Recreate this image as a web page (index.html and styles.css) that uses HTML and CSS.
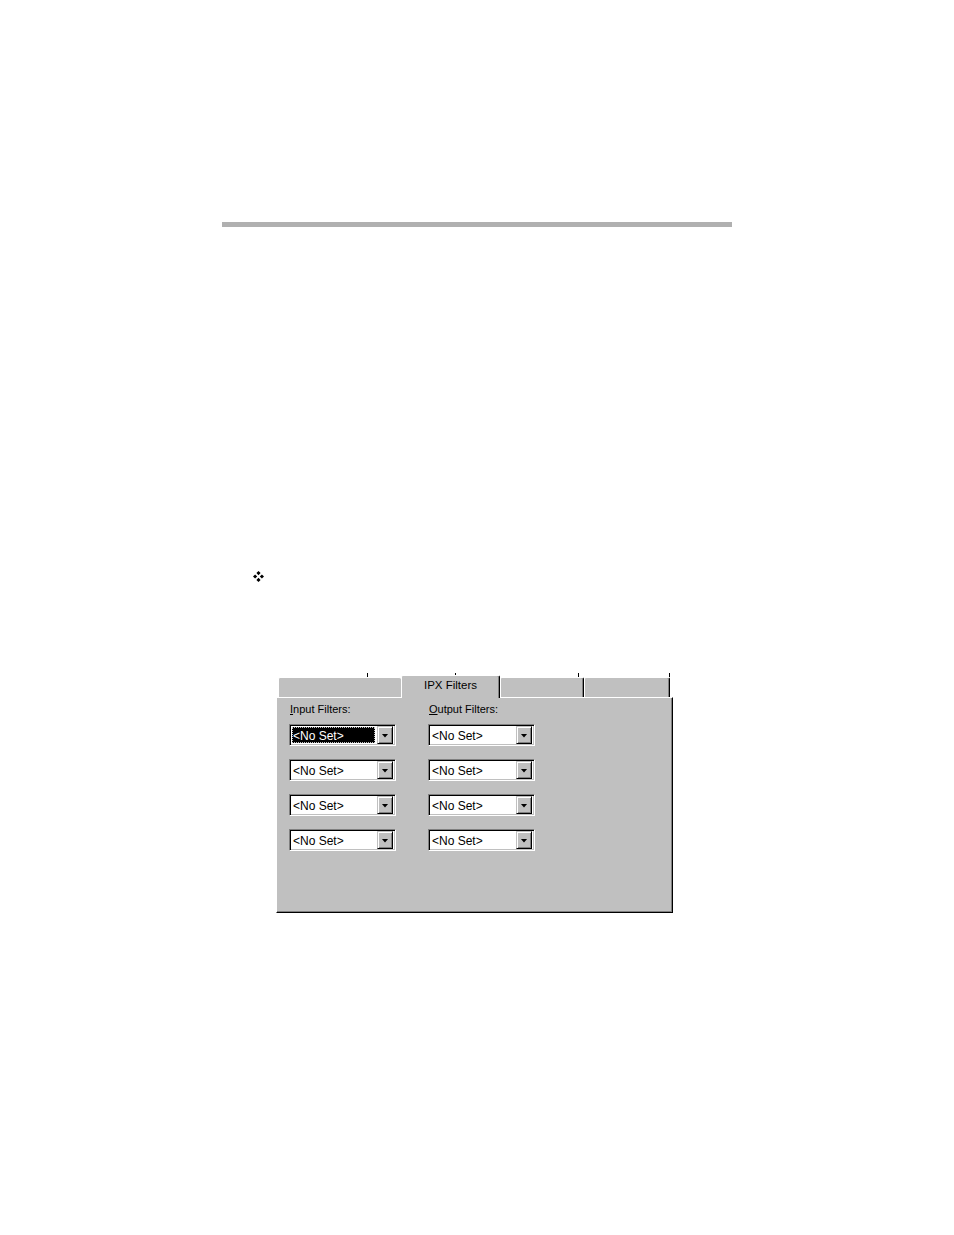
FILE: index.html
```html
<!DOCTYPE html>
<html>
<head>
<meta charset="utf-8">
<link rel="stylesheet" href="styles.css">
</head>
<body>
<div class="rule"></div>
<div class="bullet"><svg width="11" height="11" viewBox="0 0 11 11"><path d="M5.5 0 L7.6 2.1 L5.5 4.2 L3.4 2.1 Z M2.1 3.4 L4.2 5.5 L2.1 7.6 L0 5.5 Z M8.9 3.4 L11 5.5 L8.9 7.6 L6.8 5.5 Z M5.5 6.8 L7.6 8.9 L5.5 11 L3.4 8.9 Z" fill="#000"/></svg></div>
<div class="dialog">
  <div class="backrow">
    <span class="tick t1"></span><span class="tick t2"></span><span class="tick t3"></span><span class="tick t4"></span>
  </div>
  <div class="tabs">
    <div class="tab tab1"></div>
    <div class="tab active">IPX Filters</div>
    <div class="tab tab3"></div>
    <div class="tab tab4"></div>
  </div>
  <div class="panel">
    <div class="col">
      <div class="label"><u>I</u>nput Filters:</div>
      <div class="combo"><div class="field selected"><span>&lt;No Set&gt;</span></div><div class="btn"><i class="tri"></i></div></div>
      <div class="combo"><div class="field"><span>&lt;No Set&gt;</span></div><div class="btn"><i class="tri"></i></div></div>
      <div class="combo"><div class="field"><span>&lt;No Set&gt;</span></div><div class="btn"><i class="tri"></i></div></div>
      <div class="combo"><div class="field"><span>&lt;No Set&gt;</span></div><div class="btn"><i class="tri"></i></div></div>
    </div>
    <div class="col">
      <div class="label"><u>O</u>utput Filters:</div>
      <div class="combo"><div class="field"><span>&lt;No Set&gt;</span></div><div class="btn"><i class="tri"></i></div></div>
      <div class="combo"><div class="field"><span>&lt;No Set&gt;</span></div><div class="btn"><i class="tri"></i></div></div>
      <div class="combo"><div class="field"><span>&lt;No Set&gt;</span></div><div class="btn"><i class="tri"></i></div></div>
      <div class="combo"><div class="field"><span>&lt;No Set&gt;</span></div><div class="btn"><i class="tri"></i></div></div>
    </div>
  </div>
</div>
</body>
</html>
```
FILE: styles.css
```css
html, body {
  margin: 0;
  padding: 0;
  background: #ffffff;
}
body {
  font-family: "Liberation Sans", Arial, sans-serif;
  color: #000;
}
.rule {
  margin: 222px 0 0 222px;
  width: 510px;
  height: 5px;
  background: #b0b0b0;
}
.bullet {
  margin: 344px 0 0 253px;
  width: 11px;
  height: 11px;
}
.bullet svg {
  display: block;
}
.dialog {
  margin: 91px 0 0 276px;
  width: 397px;
}
.backrow {
  display: flex;
  height: 4px;
}
.tick {
  box-sizing: border-box;
  height: 4px;
  border-right: 1px solid #000;
}
.t1 { width: 92px; }
.t2 { width: 88px; }
.t3 { width: 123px; }
.t4 { width: 91px; }
.tabs {
  display: flex;
  align-items: flex-end;
  height: 20px;
  padding-left: 2px;
}
.tab {
  box-sizing: border-box;
  height: 20px;
  background: #c0c0c0;
  border-top: 1px solid #fff;
  border-left: 1px solid #fff;
  border-right: 1px solid #000;
  border-top-left-radius: 2px;
  border-top-right-radius: 2px;
  box-shadow: inset -1px 0 #808080;
}
.tab1 { width: 123px; border-right: 0; box-shadow: none; }
.tab3 { width: 84px; }
.tab4 { width: 86px; }
.tab.active {
  position: relative;
  z-index: 1;
  width: 99px;
  height: 23px;
  margin-top: -2px;
  margin-bottom: -1px;
  font-size: 11.5px;
  line-height: 18px;
  text-align: center;
  padding-top: 0;
}
.panel {
  box-sizing: border-box;
  height: 216px;
  background: #c0c0c0;
  border-top: 1px solid #fff;
  border-left: 1px solid #fff;
  border-right: 1px solid #000;
  border-bottom: 1px solid #000;
  box-shadow: inset -1px -1px #808080;
  padding: 5px 0 0 12px;
  display: flex;
  gap: 32px;
}
.col {
  display: flex;
  flex-direction: column;
  width: 107px;
}
.label {
  font-size: 11px;
  line-height: 13px;
  height: 13px;
  padding-left: 1px;
  margin-bottom: 8px;
}
.label u {
  text-decoration-thickness: 1px;
  text-underline-offset: 1px;
}
.combo {
  box-sizing: border-box;
  height: 22px;
  margin-bottom: 13px;
  display: flex;
  background: #fff;
  border: 1px solid;
  border-color: #808080 #fff #fff #808080;
  box-shadow: inset 1px 1px #000, inset -1px -1px #c0c0c0;
  padding: 1px 2px 1px 1px;
}
.field {
  flex: 1;
  display: flex;
  align-items: center;
  font-size: 12px;
  padding-left: 2px;
  padding-top: 1px;
  margin-right: 1px;
}
.field.selected {
  background: #000;
  color: #fff;
  outline: 1px dotted #c0c0c0;
  outline-offset: -1px;
  margin: 1px 2px 1px 1px;
  padding-left: 1px;
}
.btn {
  box-sizing: border-box;
  width: 16px;
  height: 18px;
  background: #c0c0c0;
  border: 1px solid;
  border-color: #c0c0c0 #000 #000 #c0c0c0;
  box-shadow: inset 1px 1px #fff, inset -1px -1px #808080;
  display: flex;
  align-items: center;
  justify-content: center;
}
.tri {
  display: block;
  width: 7px;
  height: 4px;
  background: #000;
  clip-path: polygon(0 0, 100% 0, 50% 100%);
  margin-top: 1px;
}
```
